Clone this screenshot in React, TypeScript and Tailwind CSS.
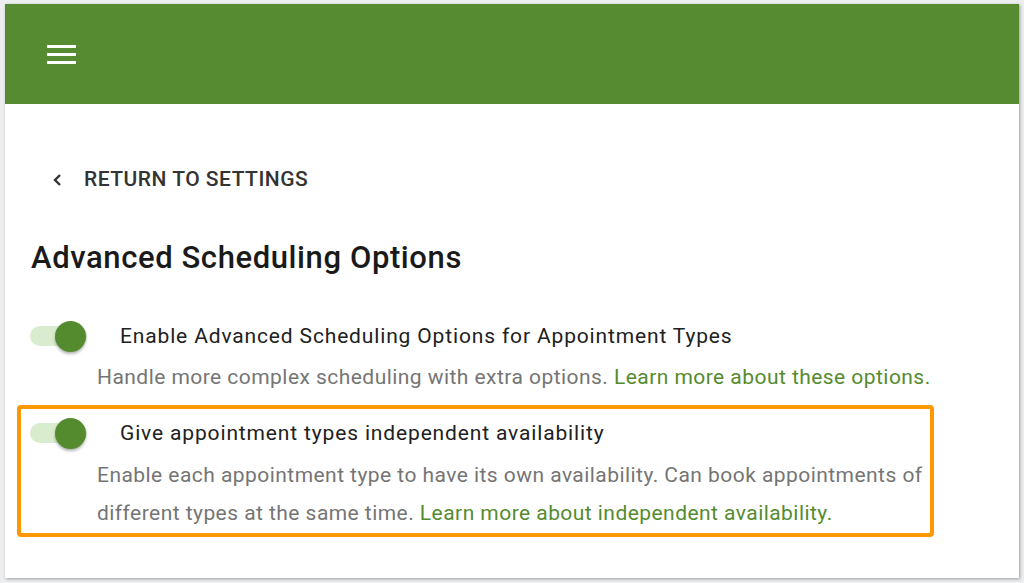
import React from "react";

function Toggle() {
  return (
    <div className="relative h-[40px] w-[62px] shrink-0 flex items-center">
      <div className="h-[20px] w-[57px] rounded-full bg-[#d9ecce]" />
      <div className="absolute left-[25px] top-[5px] h-[31px] w-[31px] rounded-full bg-[#558b2f] shadow-[0_2px_3px_rgba(0,0,0,0.3)]" />
    </div>
  );
}

export default function App() {
  return (
    <div
      className="min-h-[583px] w-[1024px] bg-[#eceef0] pt-[4px] pl-[5px] pr-[5px] pb-[5px]"
      style={{ fontFamily: "Roboto, 'Noto Sans', sans-serif" }}
    >
      <div className="h-[574px] w-[1014px] bg-white shadow-[1px_1px_3px_rgba(0,0,0,0.35)]">
        <div className="flex h-[100px] items-center bg-[#568b32] pl-[42px]">
          <svg width="29" height="20" viewBox="0 0 29 20" className="mt-[-1px]">
            <rect x="0" y="1" width="29" height="3" fill="white" />
            <rect x="0" y="9" width="29" height="3" fill="white" />
            <rect x="0" y="17" width="29" height="3" fill="white" />
          </svg>
        </div>

        <div className="mt-[56px] flex h-[40px] items-center pl-[47px]">
          <svg width="12" height="14" viewBox="0 0 12 14">
            <polyline points="8,2 3,7 8,12" fill="none" stroke="#333" strokeWidth="2.4" />
          </svg>
          <span className="ml-[20px] text-[21px] font-medium tracking-[0.5px] text-[#333333]">
            RETURN TO SETTINGS
          </span>
        </div>

        <h1 className="mt-[38px] h-[40px] pl-[26px] text-[31px] leading-[40px] font-medium tracking-[0.6px] text-[#1a1a1a]">
          Advanced Scheduling Options
        </h1>

        <div className="mt-[38px] px-[12px]">
          <div className="px-[13px]">
            <div className="flex items-center">
              <Toggle />
              <span className="ml-[28px] whitespace-nowrap text-[21px] leading-[40px] text-[#212121] tracking-[0.85px]">
                Enable Advanced Scheduling Options for Appointment Types
              </span>
            </div>
            <p className="mt-[2px] ml-[67px] whitespace-nowrap text-[21px] leading-[38px] text-[#757575] tracking-[0.45px]">
              Handle more complex scheduling with extra options.{" "}
              <span className="text-[#558b2f]">Learn more about these options.</span>
            </p>
          </div>

          <div className="mt-[9px] w-[917px] rounded-[4px] border-[4px] border-[#ff9800] pt-[4px] pb-[1px] pl-[9px]">
            <div className="flex items-center">
              <Toggle />
              <span className="ml-[28px] whitespace-nowrap text-[21px] leading-[40px] text-[#212121] tracking-[0.85px]">
                Give appointment types independent availability
              </span>
            </div>
            <p className="mt-[3px] ml-[67px] whitespace-nowrap text-[21px] leading-[38px] text-[#757575] tracking-[0.45px]">
              Enable each appointment type to have its own availability. Can book appointments of
              <br />
              different types at the same time.{" "}
              <span className="text-[#558b2f]">Learn more about independent availability.</span>
            </p>
          </div>
        </div>
      </div>
    </div>
  );
}
